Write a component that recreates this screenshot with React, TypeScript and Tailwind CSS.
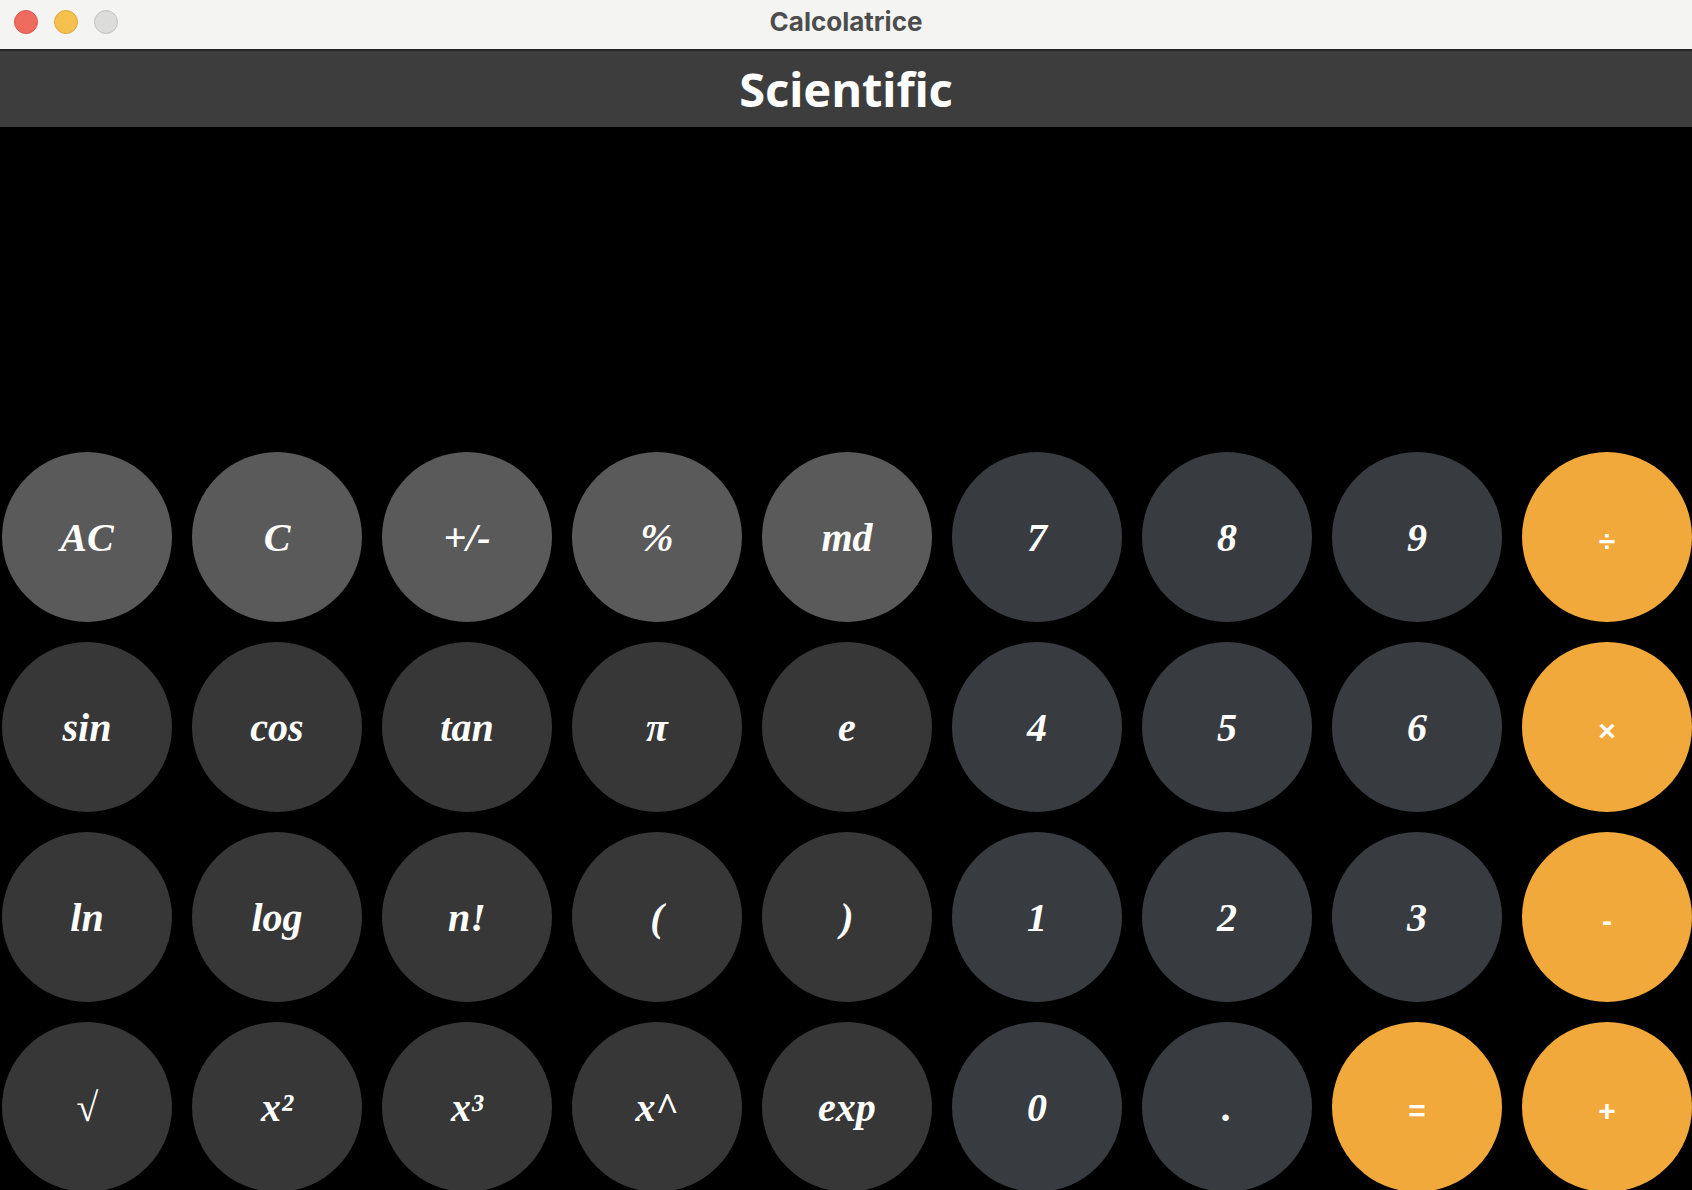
type Kind = "top" | "sci" | "num" | "op";

type Key = { label: React.ReactNode; kind: Kind };

const keys: Key[] = [
  { label: "AC", kind: "top" },
  { label: "C", kind: "top" },
  { label: "+/-", kind: "top" },
  { label: "%", kind: "top" },
  { label: "md", kind: "top" },
  { label: "7", kind: "num" },
  { label: "8", kind: "num" },
  { label: "9", kind: "num" },
  { label: "÷", kind: "op" },
  { label: "sin", kind: "sci" },
  { label: "cos", kind: "sci" },
  { label: "tan", kind: "sci" },
  { label: "π", kind: "sci" },
  { label: "e", kind: "sci" },
  { label: "4", kind: "num" },
  { label: "5", kind: "num" },
  { label: "6", kind: "num" },
  { label: "×", kind: "op" },
  { label: "ln", kind: "sci" },
  { label: "log", kind: "sci" },
  { label: "n!", kind: "sci" },
  { label: "(", kind: "sci" },
  { label: ")", kind: "sci" },
  { label: "1", kind: "num" },
  { label: "2", kind: "num" },
  { label: "3", kind: "num" },
  { label: "-", kind: "op" },
  { label: "√", kind: "sci" },
  { label: "x²", kind: "sci" },
  { label: "x³", kind: "sci" },
  { label: "x^", kind: "sci" },
  { label: "exp", kind: "sci" },
  { label: "0", kind: "num" },
  { label: ".", kind: "num" },
  { label: "=", kind: "op" },
  { label: "+", kind: "op" },
];

const bg: Record<Kind, string> = {
  top: "bg-[#5a5a5a]",
  sci: "bg-[#373737]",
  num: "bg-[#383c40]",
  op: "bg-[#f1a93b]",
};

function CalcKey({ k }: { k: Key }) {
  const isOp = k.kind === "op";
  return (
    <button
      className={`flex h-[170px] w-[170px] items-center justify-center rounded-full text-white ${bg[k.kind]} ${
        isOp
          ? "pt-[6px] font-['Liberation_Sans',sans-serif] text-[30px] font-bold"
          : "pt-[2px] font-['Liberation_Serif',serif] text-[40px] font-bold italic"
      }`}
    >
      {k.label}
    </button>
  );
}

export default function App() {
  return (
    <div className="flex h-[1190px] w-[1692px] flex-col overflow-hidden bg-black">
      <div className="relative flex h-[49px] shrink-0 items-center justify-center bg-[#f4f4f2] pb-[7px]">
        <div className="absolute left-[14px] top-[10px] flex gap-[16px]">
          <span className="h-[24px] w-[24px] rounded-full border border-[#e0554f] bg-[#ef6a5f]" />
          <span className="h-[24px] w-[24px] rounded-full border border-[#e0a93a] bg-[#f6c04e]" />
          <span className="h-[24px] w-[24px] rounded-full border border-[#c2c2c0] bg-[#dcdcda]" />
        </div>
        <span className="font-['Inter',sans-serif] text-[26px] font-bold text-[#4d4d4d]">
          Calcolatrice
        </span>
      </div>
      <div className="h-[2px] shrink-0 bg-[#262626]" />
      <div className="flex h-[76px] shrink-0 items-center justify-center bg-[#3d3d3d]">
        <span className="font-['Noto_Sans',sans-serif] text-[47px] font-bold text-white">
          Scientific
        </span>
      </div>
      <div className="h-[325px] shrink-0" />
      <div className="grid grid-cols-[repeat(9,170px)] gap-[20px] pl-[2px]">
        {keys.map((k, i) => (
          <CalcKey key={i} k={k} />
        ))}
      </div>
    </div>
  );
}
